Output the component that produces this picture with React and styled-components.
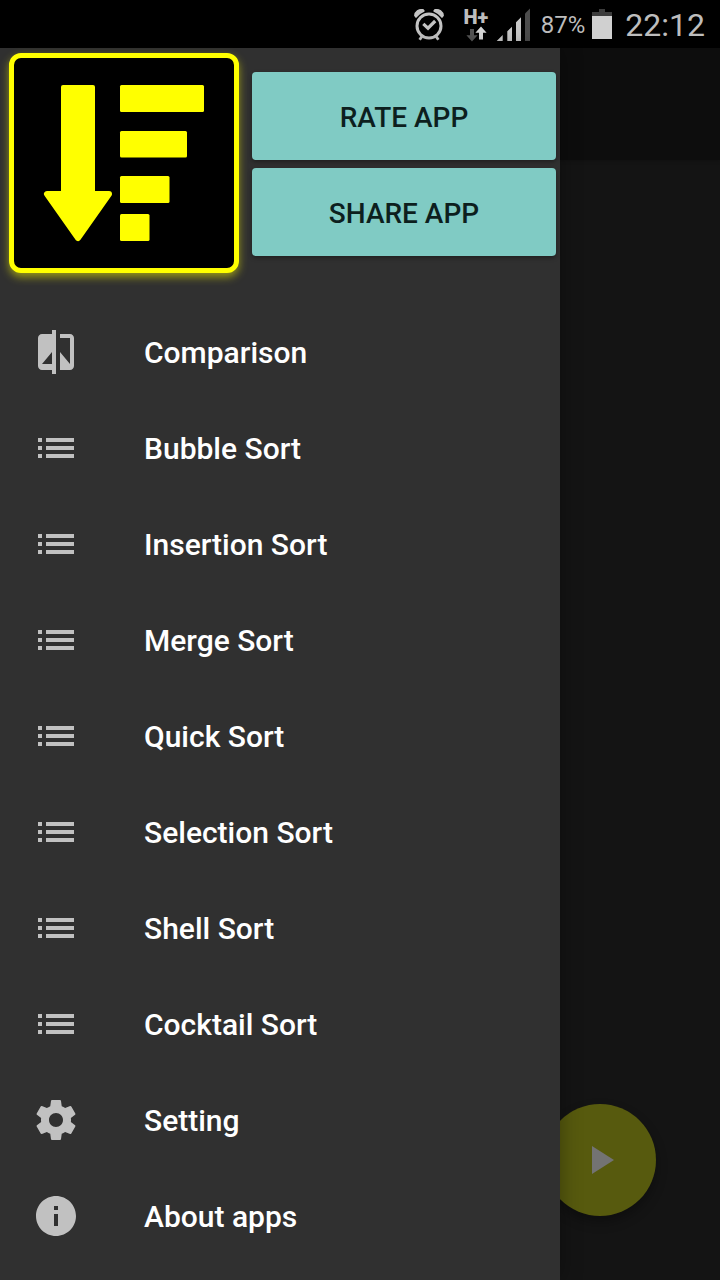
import React from 'react';
import styled, { createGlobalStyle } from 'styled-components';
import { MdCompare, MdInfo, MdList, MdPlayArrow } from 'react-icons/md';

const SettingsIcon = () => (
  <svg viewBox="0 0 24 24" fill="currentColor" aria-hidden="true">
    <path d="M19.43 12.98c.04-.32.07-.64.07-.98s-.03-.66-.07-.98l2.11-1.65c.19-.15.24-.42.12-.64l-2-3.46c-.12-.22-.39-.3-.61-.22l-2.49 1c-.52-.4-1.08-.73-1.69-.98l-.38-2.65C14.46 2.18 14.25 2 14 2h-4c-.25 0-.46.18-.49.42l-.38 2.65c-.61.25-1.17.59-1.69.98l-2.49-1c-.23-.09-.49 0-.61.22l-2 3.46c-.13.22-.07.49.12.64l2.11 1.65c-.04.32-.07.65-.07.98s.03.66.07.98l-2.11 1.65c-.19.15-.24.42-.12.64l2 3.46c.12.22.39.3.61.22l2.49-1c.52.4 1.08.73 1.69.98l.38 2.65c.03.24.24.42.49.42h4c.25 0 .46-.18.49-.42l.38-2.65c.61-.25 1.17-.59 1.69-.98l2.49 1c.23.09.49 0 .61-.22l2-3.46c.12-.22.07-.49-.12-.64l-2.11-1.65zM12 15.5c-1.93 0-3.5-1.57-3.5-3.5s1.57-3.5 3.5-3.5 3.5 1.57 3.5 3.5-1.57 3.5-3.5 3.5z" />
  </svg>
);

const AlarmIcon = () => (
  <svg width="44" height="34" viewBox="0 0 44 34" fill="none" stroke="#c4c4c4" aria-hidden="true">
    <circle cx="16" cy="18" r="12" strokeWidth="3" />
    <path d="M10.3 15.8l4.7 4.4 7.2-7.2" strokeWidth="3.2" />
    <path d="M6.6 31.8l2.4-3.4M25.4 31.8L23 28.4" strokeWidth="2.8" />
    <path
      d="M1.8 7.6C2 3.8 6 .8 10 1.8L11 3Q5.8 5 3 9.2zM30.2 7.6C30 3.8 26 .8 22 1.8L21 3Q26.2 5 29 9.2z"
      fill="#c4c4c4"
      strokeWidth="1.4"
      strokeLinejoin="round"
    />
  </svg>
);

const DataArrows = () => (
  <svg width="26" height="16" viewBox="0 0 26 16" aria-hidden="true">
    <path d="M7 3h4v6.2h3.6L9 15.4 3.4 9.2H7z" fill="#555" />
    <path d="M18 .6l5.6 6.2H20v6.8h-4V6.8h-3.6z" fill="#d8d8d8" />
  </svg>
);

const SignalIcon = () => (
  <svg width="40" height="34" viewBox="0 0 40 34" aria-hidden="true">
    <path d="M1.7 33l6-6v6zM12.3 33V23.3L17 18.7V33zM21 33V14.3l5-5V33z" fill="#c8c8c8" />
    <path d="M30 33V5.5l5-5V33z" fill="#4c4c4c" />
  </svg>
);

const BatteryIcon = () => (
  <svg width="28" height="32" viewBox="0 0 28 32" aria-hidden="true">
    <path d="M1 3h7V0h6v3h7v4H1z" fill="#3c3c3c" />
    <path d="M1 7h20v23H1z" fill="#d0d0d0" />
  </svg>
);

const LogoArt = () => (
  <svg width="220" height="210" viewBox="0 0 220 210" fill="#ffff00" role="img" aria-label="Sort">
    <rect x="47" y="27" width="34" height="110" rx="2" />
    <path d="M33 136h62L64 180z" stroke="#ffff00" strokeWidth="6" strokeLinejoin="round" />
    <rect x="106" y="27" width="84" height="27" rx="1.5" />
    <rect x="106" y="73" width="67" height="26.5" rx="1.5" />
    <rect x="106" y="118" width="49.5" height="27" rx="1.5" />
    <rect x="106" y="156" width="29.5" height="27" rx="1.5" />
  </svg>
);

const menuItems = [
  { label: 'Comparison', icon: MdCompare },
  { label: 'Bubble Sort', icon: MdList },
  { label: 'Insertion Sort', icon: MdList },
  { label: 'Merge Sort', icon: MdList },
  { label: 'Quick Sort', icon: MdList },
  { label: 'Selection Sort', icon: MdList },
  { label: 'Shell Sort', icon: MdList },
  { label: 'Cocktail Sort', icon: MdList },
  { label: 'Setting', icon: SettingsIcon },
  { label: 'About apps', icon: MdInfo },
];

const App = () => (
  <Screen>
    <GlobalStyle />
    <StatusBar>
      <AlarmIcon />
      <Network>
        <NetworkType>H+</NetworkType>
        <DataArrows />
      </Network>
      <SignalIcon />
      <BatteryLevel>87%</BatteryLevel>
      <BatteryIcon />
      <Clock>22:12</Clock>
    </StatusBar>
    <Stage>
      <Page>
        <Toolbar />
        <PlayButton type="button" aria-label="Play">
          <MdPlayArrow />
        </PlayButton>
      </Page>
      <Drawer>
        <DrawerHeader>
          <Logo>
            <LogoArt />
          </Logo>
          <Actions>
            <ActionButton type="button">RATE APP</ActionButton>
            <ActionButton type="button">SHARE APP</ActionButton>
          </Actions>
        </DrawerHeader>
        <Menu>
          {menuItems.map(({ label, icon: Icon }) => (
            <MenuItem key={label} href="#">
              <Icon />
              <span>{label}</span>
            </MenuItem>
          ))}
        </Menu>
      </Drawer>
    </Stage>
  </Screen>
);

export default App;

// Styled-components
const GlobalStyle = createGlobalStyle`
  * {
    box-sizing: border-box;
  }

  body {
    margin: 0;
    background-color: #141414;
    font-family: Roboto, 'Liberation Sans', sans-serif;
  }
`;

const Screen = styled.div`
  display: flex;
  flex-direction: column;
  min-height: 100vh;
`;

const StatusBar = styled.header`
  display: flex;
  align-items: center;
  justify-content: flex-end;
  gap: 6px;
  height: 48px;
  padding: 2px 15px 0 0;
  background-color: #000;
  color: #bdbdbd;
`;

const Network = styled.div`
  display: flex;
  flex-direction: column;
  align-items: center;
`;

const NetworkType = styled.span`
  font-size: 20px;
  font-weight: 900;
  line-height: 18px;
`;

const BatteryLevel = styled.span`
  font-size: 24px;
`;

const Clock = styled.time`
  font-size: 32px;
`;

const Stage = styled.div`
  flex: 1;
  display: grid;
  grid-template-columns: minmax(0, 1fr);
`;

// the page and the drawer share one grid cell, the drawer on top
const Page = styled.main`
  grid-area: 1 / 1;
  display: flex;
  flex-direction: column;
  justify-content: space-between;
  background-color: #141414;
`;

const Toolbar = styled.div`
  height: 112px;
  background-color: #0d0d0d;
  box-shadow: 0 1px 4px rgba(0, 0, 0, 0.2);
`;

const PlayButton = styled.button`
  display: flex;
  align-items: center;
  justify-content: center;
  align-self: flex-end;
  width: 112px;
  height: 112px;
  margin: 0 64px 64px 0;
  padding: 0;
  border: none;
  border-radius: 50%;
  background-color: #575a0e;
  color: #737373;
  box-shadow: 0 6px 12px rgba(0, 0, 0, 0.3);
  cursor: pointer;

  svg {
    width: 48px;
    height: 48px;
  }
`;

const Drawer = styled.aside`
  grid-area: 1 / 1;
  z-index: 1;
  width: calc(100% - 160px);
  background-color: #303030;
  box-shadow: 0 0 20px rgba(0, 0, 0, 0.35);
`;

const DrawerHeader = styled.div`
  display: flex;
  align-items: flex-start;
  gap: 13px;
  padding: 5px 4px 15px 9px;
`;

const Logo = styled.div`
  flex: none;
  border: 5px solid #ffff00;
  border-radius: 12px;
  background-color: #000;
  box-shadow: 0 4px 8px rgba(255, 255, 0, 0.5);

  svg {
    display: block;
  }
`;

const Actions = styled.div`
  flex: 1;
  display: flex;
  flex-direction: column;
  gap: 8px;
  padding-top: 19px;
`;

const ActionButton = styled.button`
  height: 88px;
  padding: 2px 16px 0;
  border: none;
  border-radius: 4px;
  background-color: #80cbc4;
  color: #0d1f1e;
  font-family: inherit;
  font-size: 28px;
  font-weight: 500;
  box-shadow: 0 2px 4px rgba(0, 0, 0, 0.35);
  cursor: pointer;
`;

const Menu = styled.nav`
  display: flex;
  flex-direction: column;
  padding: 16px 0;
`;

const MenuItem = styled.a`
  display: flex;
  align-items: center;
  gap: 64px;
  height: 96px;
  padding: 0 32px;
  color: #fff;
  font-size: 30px;
  font-weight: 500;
  text-decoration: none;

  svg {
    flex: none;
    width: 48px;
    height: 48px;
    color: #c1c1c1;
  }
`;
